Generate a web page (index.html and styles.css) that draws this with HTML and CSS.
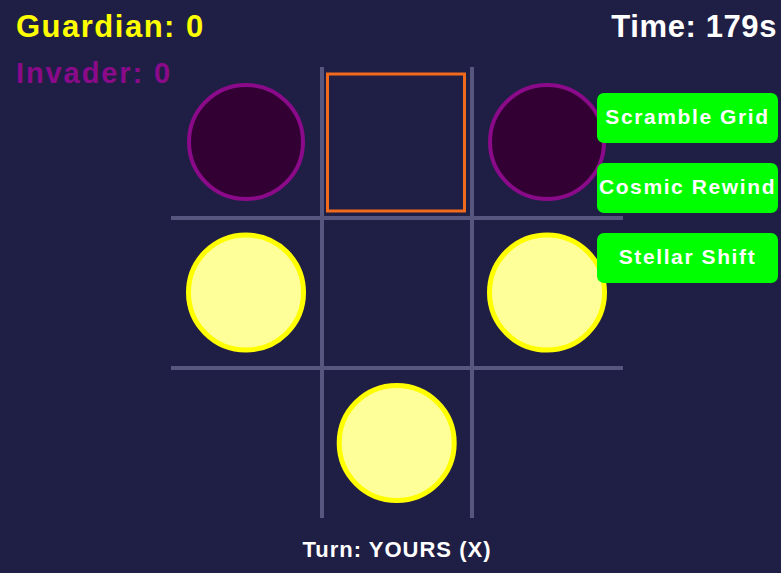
FILE: index.html
```html
<!DOCTYPE html>
<html>
<head>
<meta charset="utf-8">
<link rel="stylesheet" href="styles.css">
</head>
<body>
<div class="stage">
  <div class="play">
    <svg class="board" width="452" height="452" viewBox="0 0 452 452">
      <g stroke="#56567f" stroke-width="4">
        <line x1="151" y1="0" x2="151" y2="451"/>
        <line x1="301" y1="0" x2="301" y2="451"/>
        <line x1="0" y1="151" x2="452" y2="151"/>
        <line x1="0" y1="301" x2="452" y2="301"/>
      </g>
      <g fill="#330033" stroke="#8a0a8a" stroke-width="4">
        <circle cx="75" cy="75" r="57"/>
        <circle cx="376" cy="75" r="57"/>
      </g>
      <g fill="#ffff99" stroke="#ffff00" stroke-width="5">
        <circle cx="75" cy="225.5" r="57.5"/>
        <circle cx="376" cy="225.5" r="57.5"/>
        <circle cx="225.7" cy="376" r="57.5"/>
      </g>
      <rect x="156.5" y="7" width="137" height="137" fill="none" stroke="#f26a1b" stroke-width="3"/>
    </svg>
    <div class="turn">Turn: YOURS (X)</div>
  </div>
  <div class="scores">
    <div class="score guardian">Guardian: 0</div>
    <div class="score invader">Invader: 0</div>
  </div>
  <div class="timer">Time: 179s</div>
  <div class="powers">
    <button class="power">Scramble Grid</button>
    <button class="power">Cosmic Rewind</button>
    <button class="power">Stellar Shift</button>
  </div>
</div>
</body>
</html>
```
FILE: styles.css
```css
html, body {
  margin: 0;
  padding: 0;
  background: #1f1f45;
}
body {
  font-family: "Liberation Sans", Arial, sans-serif;
  font-weight: bold;
}
.stage {
  position: relative;
  width: 781px;
  height: 573px;
  overflow: hidden;
  padding-top: 67px;
  box-sizing: border-box;
}
.play {
  width: 452px;
  margin-left: 171px;
  display: flex;
  flex-direction: column;
  align-items: center;
}
.board {
  display: block;
}
.turn {
  margin-top: 20px;
  color: #ffffff;
  font-size: 22px;
  line-height: 22px;
  letter-spacing: 1px;
}
.scores {
  position: absolute;
  left: 16px;
  top: 11px;
  display: flex;
  flex-direction: column;
}
.score {
  white-space: nowrap;
}
.guardian {
  color: #ffff00;
  font-size: 31px;
  line-height: 31px;
  letter-spacing: 1.5px;
}
.invader {
  color: #8a0a8a;
  font-size: 29px;
  line-height: 29px;
  letter-spacing: 1.9px;
  margin-top: 17px;
}
.timer {
  position: absolute;
  right: 4px;
  top: 11px;
  color: #ffffff;
  font-size: 31px;
  line-height: 31px;
  letter-spacing: 0.6px;
}
.powers {
  position: absolute;
  left: 597px;
  top: 93px;
  width: 181px;
  display: flex;
  flex-direction: column;
  gap: 20px;
}
.power {
  height: 50px;
  border: none;
  border-radius: 7px;
  background: #00ff00;
  color: #ffffff;
  font-family: "Liberation Sans", Arial, sans-serif;
  font-weight: bold;
  font-size: 21px;
  letter-spacing: 1.6px;
  padding: 0 0 2px 0;
  white-space: nowrap;
  display: flex;
  align-items: center;
  justify-content: center;
}
```
